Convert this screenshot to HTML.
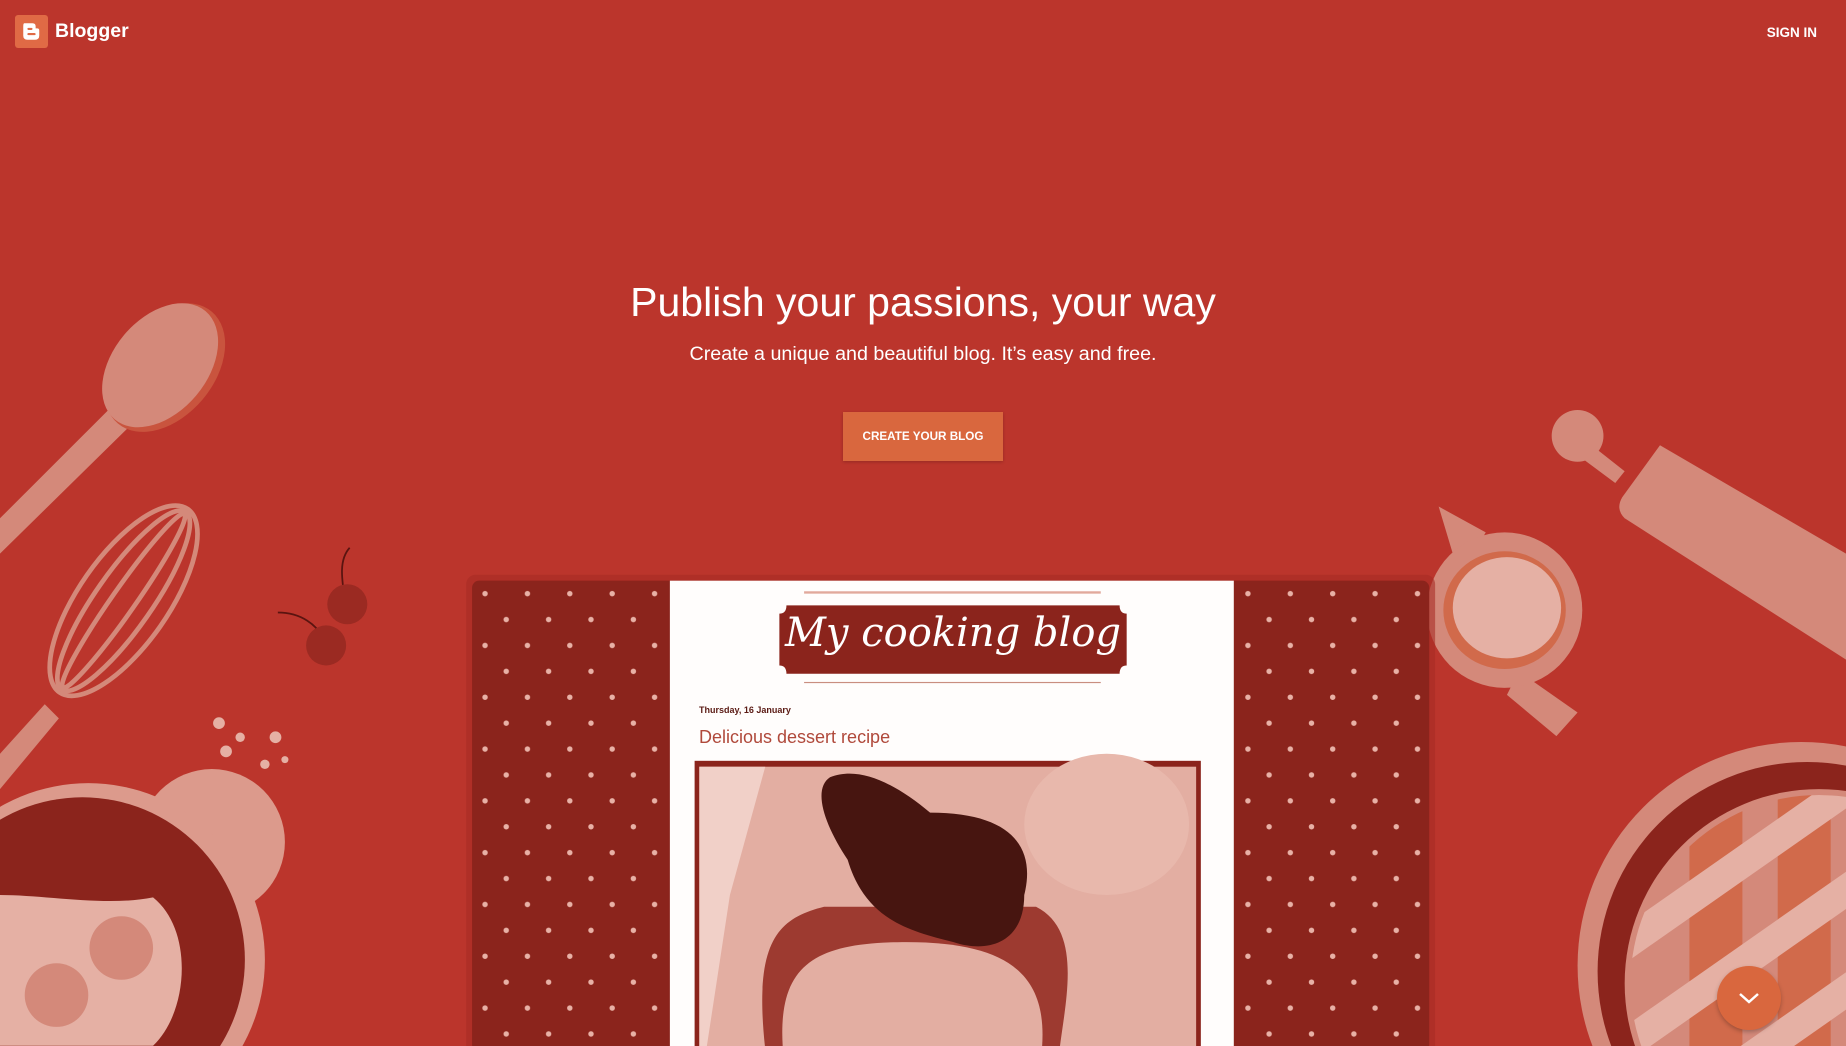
<!DOCTYPE html>
<html><head><meta charset="utf-8"><style>
html,body{margin:0;padding:0;width:1846px;height:1046px;overflow:hidden}
body{background:#bb352c;position:relative;font-family:"Liberation Sans",sans-serif;color:#fff}
svg.deco{position:absolute;left:0;top:0}
.abs{position:absolute}
</style></head><body>
<svg class="deco" width="1846" height="1046" viewBox="0 0 1568 888">
<defs>
<pattern id="dots" width="36" height="44" patternUnits="userSpaceOnUse" x="408" y="500">
<circle cx="4" cy="4" r="2.3" fill="#e8b1a6"/><circle cx="22" cy="26" r="2.3" fill="#e8b1a6"/>
</pattern>
<clipPath id="pc"><circle cx="1545" cy="835" r="160"/></clipPath>
</defs>
<!-- spoon -->
<path d="M0 440 L95 345 L110 362 L0 470 Z" fill="#d4897a"/>
<ellipse cx="140" cy="312" rx="42" ry="62" transform="rotate(40 140 312)" fill="#c9543e"/>
<ellipse cx="136" cy="310" rx="40" ry="60" transform="rotate(40 136 310)" fill="#d4897a"/>
<!-- whisk -->
<g fill="none" stroke="#d4897a" stroke-width="4">
<ellipse cx="105" cy="510" rx="38" ry="95" transform="rotate(35 105 510)"/>
<ellipse cx="105" cy="510" rx="24" ry="92" transform="rotate(35 105 510)"/>
<ellipse cx="105" cy="510" rx="10" ry="90" transform="rotate(35 105 510)"/>
</g>
<path d="M0 640 L38 598 L50 610 L0 670 Z" fill="#d4897a"/>
<!-- cherries -->
<path d="M293 510 C290 490 288 475 297 465 M276 545 C270 530 255 520 236 520" stroke="#5a1410" stroke-width="1.5" fill="none"/>
<circle cx="295" cy="513" r="17" fill="#9b2a22"/><circle cx="277" cy="548" r="17" fill="#9b2a22"/>
<g fill="#e5b0a4"><circle cx="186" cy="614" r="5"/><circle cx="204" cy="626" r="4"/><circle cx="192" cy="638" r="5"/><circle cx="234" cy="626" r="5"/><circle cx="225" cy="649" r="4"/><circle cx="242" cy="645" r="3"/></g>
<!-- crumbly -->
<circle cx="180" cy="715" r="62" fill="#dc9a8c"/>
<!-- bowl -->
<circle cx="75" cy="815" r="150" fill="#dc9a8c"/>
<circle cx="70" cy="815" r="138" fill="#8b241c"/>
<path d="M0 760 C40 760 90 770 130 762 C165 790 160 860 130 888 L0 888 Z" fill="#e5b0a4"/>
<circle cx="103" cy="805" r="27" fill="#d4897a"/><circle cx="48" cy="845" r="27" fill="#d4897a"/>
<!-- rolling pin -->
<circle cx="1340" cy="370" r="22" fill="#d4897a"/>
<path d="M1352 378 L1380 400 L1372 410 L1345 390 Z" fill="#d4897a"/>
<path d="M1410 378 L1568 470 L1568 560 L1380 440 Q1372 432 1378 422 Z" fill="#d4897a"/>
<!-- jug -->
<path d="M1222 430 L1262 452 L1240 490 Z" fill="#d4897a"/>
<path d="M1290 570 L1340 605 L1322 625 L1280 590 Z" fill="#d4897a"/>
<circle cx="1278" cy="518" r="66" fill="#d4897a"/>
<ellipse cx="1278" cy="518" rx="52" ry="50" fill="#d16a4b"/>
<ellipse cx="1280" cy="516" rx="46" ry="43" fill="#e5b0a4"/>
<!-- pie -->
<circle cx="1530" cy="820" r="190" fill="#d4897a"/>
<circle cx="1535" cy="825" r="178" fill="#8b241c"/>
<circle cx="1545" cy="835" r="165" fill="#d4897a"/>
<g clip-path="url(#pc)">
<g fill="#d16a4b"><rect x="1435" y="660" width="45" height="240"/><rect x="1510" y="660" width="45" height="240"/></g>
<g fill="#e5b0a4" transform="rotate(-35 1500 800)"><rect x="1300" y="720" width="400" height="26"/><rect x="1300" y="790" width="400" height="26"/><rect x="1300" y="860" width="400" height="26"/></g>
</g>
<!-- mockup -->
<rect x="396" y="488" width="823" height="420" rx="8" fill="#a62c24" opacity=".6"/>
<rect x="401" y="493" width="813" height="400" rx="6" fill="#8b241c"/>
<rect x="401" y="493" width="168" height="400" fill="url(#dots)"/>
<rect x="1048" y="493" width="166" height="400" fill="url(#dots)"/>
<rect x="569" y="493" width="479" height="400" fill="#fffdfc"/>
<rect x="683" y="502" width="252" height="2" fill="#e1a99c"/>
<rect x="683" y="579" width="252" height="1" fill="#c98e80"/>
<path d="M668 514 H951 Q951 521 957 521 V565 Q951 565 951 572 H668 Q668 565 662 565 V521 Q668 521 668 514 Z" fill="#8b241c"/>
<rect x="590" y="646" width="430" height="250" fill="#8b241c"/>
<rect x="594" y="651" width="422" height="240" fill="#e3aea2"/>
<path d="M594 651 L650 651 L620 760 L600 891 L594 891 Z" fill="#f1d0c8"/>
<ellipse cx="940" cy="700" rx="70" ry="60" fill="#e8b8ac"/>
<path d="M650 891 C640 800 660 780 700 770 L880 770 C920 790 905 850 900 891 Z" fill="#9d3a30"/>
<path d="M665 891 C660 820 690 800 770 800 C860 800 890 830 885 891 Z" fill="#e3aea2"/>
<path d="M705 660 C730 650 760 665 790 690 C860 690 880 720 870 760 C870 800 840 810 810 800 C770 790 735 780 720 730 C700 700 690 670 705 660 Z" fill="#471510"/>
</svg>

<svg class="abs" style="left:15px;top:15px" width="33" height="33" viewBox="0 0 32 32"><rect width="32" height="32" rx="3" fill="#e06a45"/><path d="M9 8 H17 Q20 8 20 11 V13 H21.5 Q23.5 13 23.5 15 V20 Q23.5 24 19.5 24 H12 Q8 24 8 20 V11 Q8 8 9 8 Z" fill="#fff"/><rect x="12" y="12.5" width="5" height="2" rx="1" fill="#e06a45"/><rect x="12" y="17.5" width="8" height="2" rx="1" fill="#e06a45"/></svg>
<div class="abs" style="left:55px;top:20px;font-size:19.5px;font-weight:bold">Blogger</div>
<div class="abs" style="right:29px;top:25px;font-size:13.5px;font-weight:bold">SIGN IN</div>

<div class="abs" style="left:0;width:1846px;top:279px;text-align:center;font-size:41px">Publish your passions, your way</div>
<div class="abs" style="left:0;width:1846px;top:343px;text-align:center;font-size:19.7px">Create a unique and beautiful blog. It’s easy and free.</div>
<div class="abs" style="left:843px;top:412px;width:160px;height:49px;background:#d9673e;box-shadow:0 1px 3px rgba(0,0,0,.2);text-align:center;line-height:49px;font-size:11.7px;font-weight:bold">CREATE YOUR BLOG</div>

<div class="abs" style="left:779px;top:610px;width:348px;text-align:center;white-space:nowrap;font-family:'DejaVu Serif',serif;font-style:italic;font-size:40px;color:#fff">My cooking blog</div>
<div class="abs" style="left:699px;top:705px;font-size:9px;font-weight:bold;color:#5a1a14">Thursday, 16 January</div>
<div class="abs" style="left:699px;top:727px;font-size:18px;color:#b0493b">Delicious dessert recipe</div>

<div class="abs" style="left:1717px;top:966px;width:64px;height:64px;border-radius:50%;background:#d9673e;box-shadow:0 2px 4px rgba(0,0,0,.25)"></div>
<svg class="abs" style="left:1737px;top:990px" width="24" height="16" viewBox="0 0 24 16"><path d="M3 4 L12 12 L21 4" stroke="#fff" stroke-width="2.5" fill="none"/></svg>
</body></html>
